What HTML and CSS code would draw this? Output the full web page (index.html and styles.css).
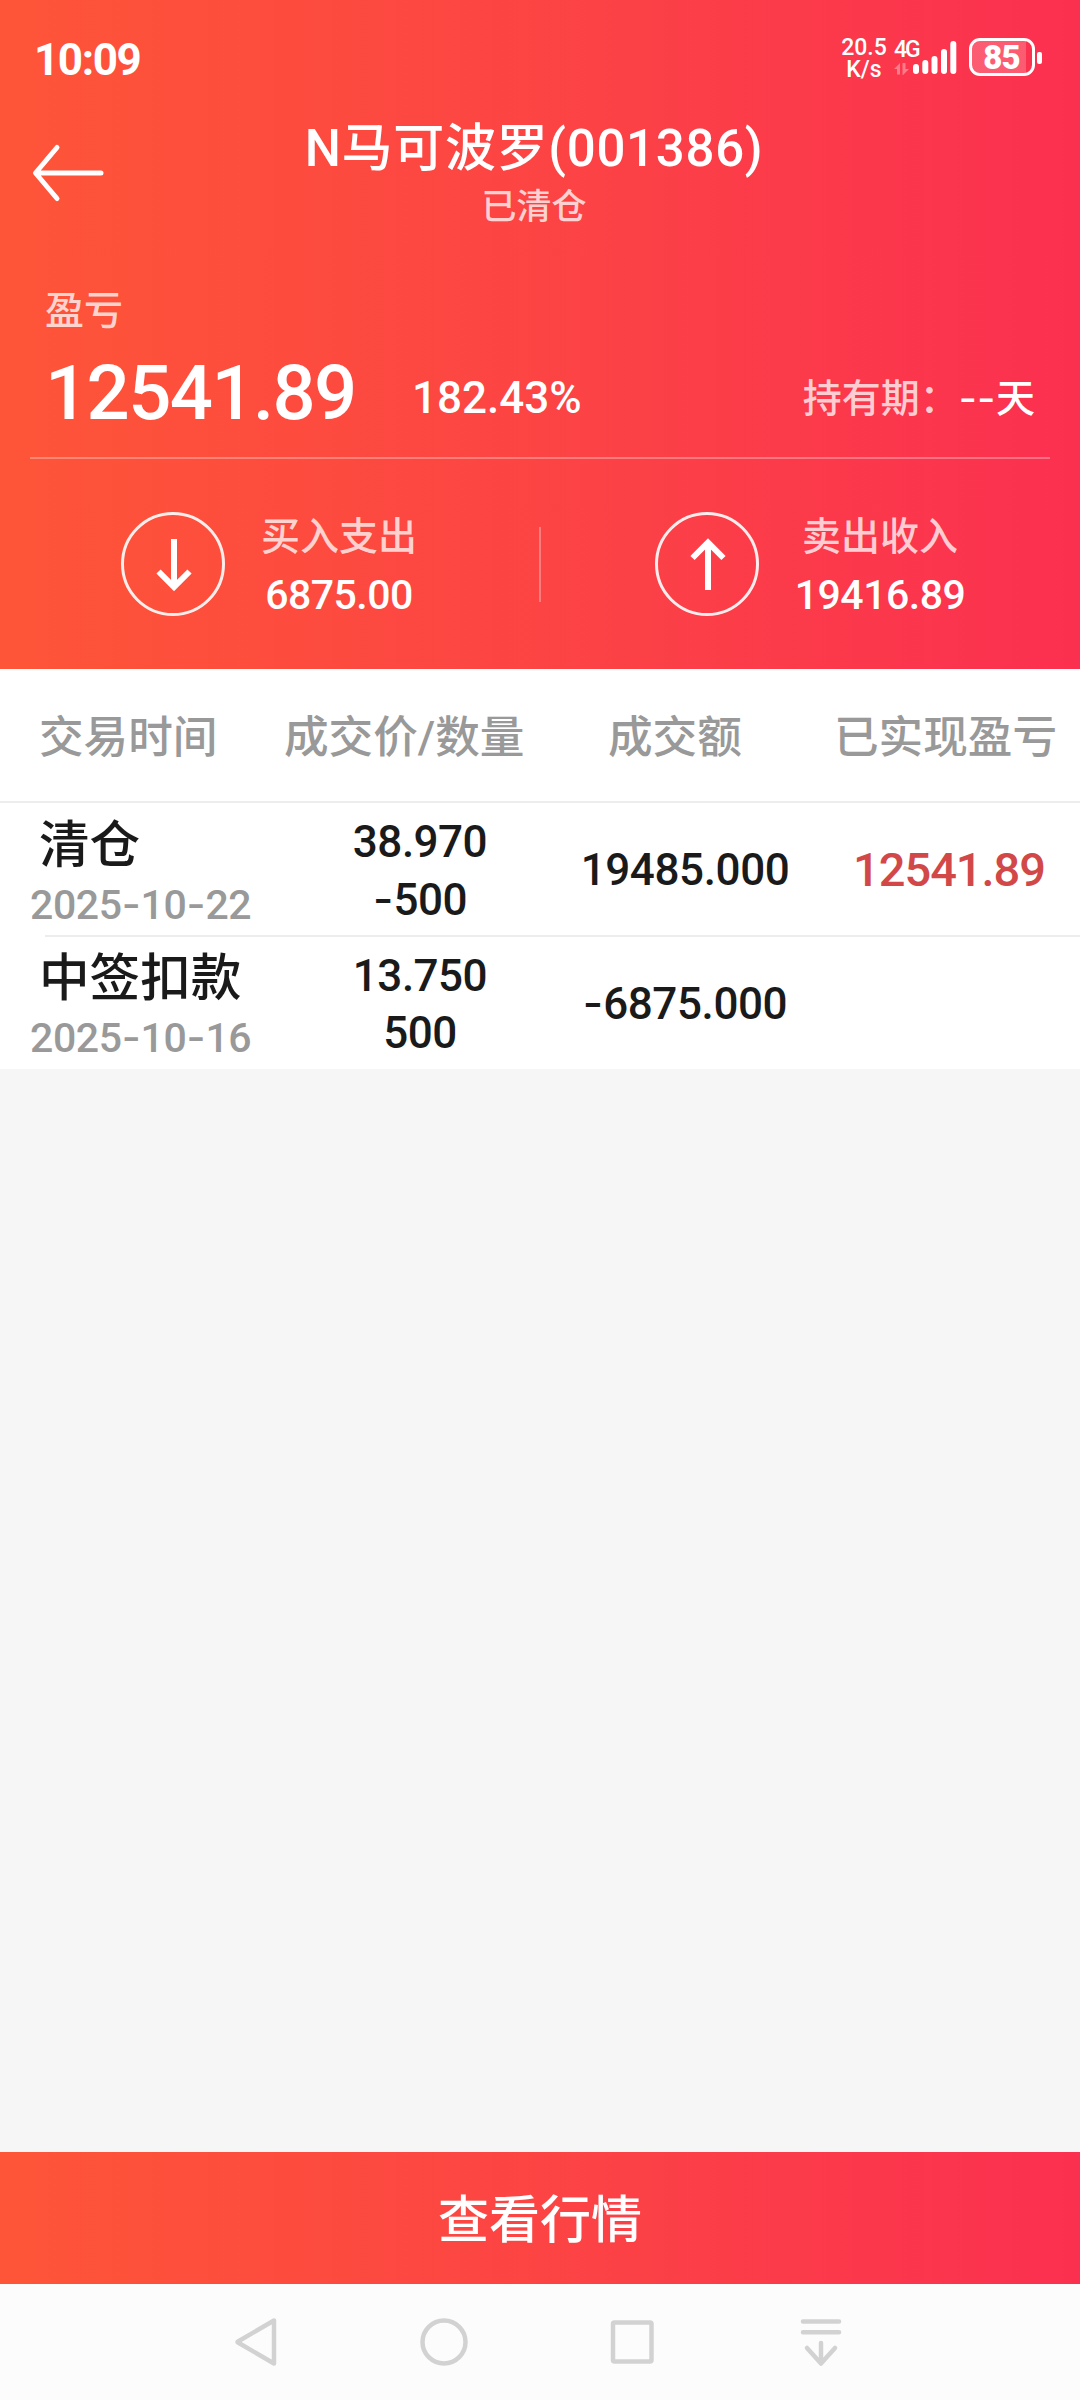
FILE: index.html
```
<!DOCTYPE html>
<html lang="zh-CN">

<head>
  <meta charset="UTF-8">
  <title>N马可波罗(001386)</title>
  <link rel="stylesheet" href="styles.css">
</head>

<body>
  <div class="header">
    <div class="status-bar">
      <span class="time">10:09</span>
      <div class="status-right">
        <div class="speed"><span>20.5</span><span>K/s</span></div>
        <div class="signal">
          <span class="net">4G</span>
          <svg width="64" height="38" viewBox="0 0 64 38">
            <g fill="#fff" fill-opacity=".35">
              <path d="M0 31l6-6v11.500h-3v-5.500zM8.500 25h3v6h3.500l-6 6h-.500z" />
            </g>
            <g stroke="#fff" stroke-width="6" stroke-linecap="round">
              <path d="M22 29v4M31.300 25v8M40.500 21v12M50 14v19M59.300 6v27" />
            </g>
          </svg>
        </div>
        <div class="battery"><span>85</span></div>
        <i class="battery-cap"></i>
      </div>
    </div>

    <div class="title-bar">
      <svg class="back" width="74" height="60" viewBox="0 0 74 60">
        <path d="M4 30h65M25 4.500L3.500 30L25 55.500" fill="none" stroke="#fff" stroke-width="5" stroke-linecap="round" stroke-linejoin="round" />
      </svg>
      <div class="titles">
        <div class="title">N马可波罗(001386)</div>
        <div class="subtitle">已清仓</div>
      </div>
    </div>

    <div class="profit">
      <div class="profit-label">盈亏</div>
      <div class="profit-row">
        <span class="profit-num">12541.89</span>
        <span class="profit-rate">182.43%</span>
        <span class="hold"><span class="light">持有期：</span><span class="dash">--</span>天</span>
      </div>
    </div>

    <div class="flows">
      <div class="flow">
        <svg width="104" height="104" viewBox="0 0 104 104" fill="none" stroke="#fff">
          <circle cx="52" cy="52" r="50.500" stroke-width="3" stroke-opacity=".9" />
          <path d="M53 27v48M37.500 59.500L53 75l15.500-15.500" stroke-width="6" />
        </svg>
        <div class="flow-text">
          <div class="light">买入支出</div>
          <div class="flow-num">6875.00</div>
        </div>
      </div>
      <div class="flow-line"></div>
      <div class="flow">
        <svg width="104" height="104" viewBox="0 0 104 104" fill="none" stroke="#fff">
          <circle cx="52" cy="52" r="50.500" stroke-width="3" stroke-opacity=".9" />
          <path d="M53 78V30M37.500 46L53 30.500L68.500 46" stroke-width="6" />
        </svg>
        <div class="flow-text">
          <div class="light">卖出收入</div>
          <div class="flow-num">19416.89</div>
        </div>
      </div>
    </div>
  </div>

  <div class="table">
    <div class="row table-head">
      <div>交易时间</div>
      <div>成交价/数量</div>
      <div>成交额</div>
      <div>已实现盈亏</div>
    </div>
    <div class="row">
      <div class="when">
        <div class="type">清仓</div>
        <div class="date">2025<span class="dash">-</span>10<span class="dash">-</span>22</div>
      </div>
      <div class="price">
        <div>38.970</div>
        <div><span class="dash">-</span>500</div>
      </div>
      <div class="amount">19485.000</div>
      <div class="gain">12541.89</div>
    </div>
    <div class="row">
      <div class="when">
        <div class="type">中签扣款</div>
        <div class="date">2025<span class="dash">-</span>10<span class="dash">-</span>16</div>
      </div>
      <div class="price">
        <div>13.750</div>
        <div>500</div>
      </div>
      <div class="amount"><span class="dash">-</span>6875.000</div>
      <div class="gain"></div>
    </div>
  </div>

  <div class="blank"></div>

  <div class="quote-btn">查看行情</div>

  <div class="nav">
    <svg width="50" height="54" viewBox="0 0 50 54">
      <path d="M42 5.500V48.500L6 27.500Q5 27 6 26.500Z" />
    </svg>
    <svg width="50" height="54" viewBox="0 0 50 54">
      <circle cx="24" cy="27" r="21.500" />
    </svg>
    <svg width="50" height="54" viewBox="0 0 50 54">
      <rect x="5" y="7.500" width="38.500" height="39" rx="1.500" />
    </svg>
    <svg width="50" height="54" viewBox="0 0 50 54">
      <path d="M7 6.500h36M7 17.200h36M25 28v20M11 33l14 15.500L39 33" />
    </svg>
  </div>
</body>

</html>
```
FILE: styles.css
```
* {
  box-sizing: border-box;
}

body {
  margin: 0;
  width: 1080px;
  height: 2400px;
  display: flex;
  flex-direction: column;
  overflow: hidden;
  background-color: #f6f6f6;
  color: #1a1a1a;
  font-family: Roboto, "Noto Sans CJK SC", sans-serif;
  font-weight: 500;
  white-space: nowrap;
}

.dash {
  font-family: Inter, sans-serif;
  letter-spacing: 0;
}

.light {
  color: rgba(255, 255, 255, 0.75);
}

/* 顶部红色区域 */
.header {
  height: 669px;
  flex: none;
  color: white;
  background: linear-gradient(to right, #fe5538, #fc4444 50%, #fb3050);
}

.status-bar {
  height: 117px;
  display: flex;
  justify-content: space-between;
  padding: 0 38px 0 34px;
}

.time {
  font-size: 44px;
  font-weight: 700;
  line-height: 120px;
  letter-spacing: -1.4px;
}

.status-right {
  display: flex;
  align-items: flex-start;
  padding-top: 38px;
}

.speed {
  width: 44px;
  margin-top: -1px;
  display: flex;
  flex-direction: column;
  align-items: center;
  font-size: 23px;
  line-height: 22px;
}

.signal {
  position: relative;
  width: 64px;
  height: 38px;
  margin-left: 8px;
}

.signal svg {
  display: block;
}

.net {
  position: absolute;
  left: 0;
  top: 0;
  font-size: 23px;
  line-height: 24px;
  letter-spacing: -2px;
}

.battery {
  width: 66px;
  height: 38px;
  margin-left: 11px;
  padding: 2px 6px 2px 2px;
  border: 3px solid white;
  border-radius: 11px;
  background: linear-gradient(rgba(255, 255, 255, 0.2), rgba(255, 255, 255, 0.2)) no-repeat 0 0 / 54px 32px;
  display: flex;
  align-items: center;
  justify-content: center;
}

.battery span {
  font-size: 33px;
  font-weight: 900;
  line-height: 32px;
  letter-spacing: -1px;
  padding: 1px 0 0 3px;
}

.battery-cap {
  width: 5px;
  height: 12px;
  margin: 14px 0 0 2px;
  border-radius: 2px;
  background-color: white;
}

.title-bar {
  height: 157px;
  display: grid;
  grid-template-columns: 107px 1fr 119px;
}

.back {
  margin: 26px 0 0 32px;
}

.titles {
  text-align: center;
}

.title {
  padding-top: 1px;
  font-size: 51px;
  line-height: 62px;
  letter-spacing: 0.7px;
}

.subtitle {
  margin-top: 7px;
  font-size: 35px;
  line-height: 42px;
  color: rgba(255, 255, 255, 0.75);
}

.profit {
  height: 185px;
  margin: 0 30px;
  padding: 14px 15px 0;
  border-bottom: 2px solid rgba(255, 255, 255, 0.3);
}

.profit-label {
  font-size: 39px;
  line-height: 46px;
  color: rgba(255, 255, 255, 0.75);
}

.profit-row {
  display: flex;
  align-items: flex-start;
  line-height: 90px;
  margin-top: 14px;
}

.profit-num {
  font-size: 76px;
  letter-spacing: -1.6px;
  width: 367px;
}

.profit-rate {
  font-size: 44px;
  line-height: 100px;
}

.hold {
  margin-left: auto;
  font-size: 39px;
  line-height: 100px;
}

.hold .dash {
  letter-spacing: 0.6px;
}

.flows {
  height: 210px;
  display: grid;
  grid-template-columns: 539px 2px 539px;
  align-items: center;
}

.flow {
  display: flex;
  align-items: center;
  padding-left: 121px;
}

.flow + .flow-line + .flow {
  padding-left: 114px;
}

.flow svg {
  flex: none;
}

.flow-text {
  width: 196px;
  margin-left: 16px;
  padding-top: 3px;
  text-align: center;
  font-size: 39px;
  line-height: 58px;
}

.flow + .flow-line + .flow .flow-text {
  margin-left: 23px;
}

.flow-num {
  font-size: 41px;
  letter-spacing: -0.5px;
}

.flow-line {
  height: 75px;
  background-color: rgba(255, 255, 255, 0.3);
}

/* 成交记录 */
.table {
  flex: none;
  background-color: white;
}

.row {
  position: relative;
  height: 133px;
  display: grid;
  grid-template-columns: 284px 272px 258px 266px;
  align-items: center;
}

.row + .row + .row::before {
  content: "";
  position: absolute;
  left: 45px;
  right: 0;
  top: -1px;
  height: 2px;
  background-color: #ededed;
}

.table-head {
  height: 134px;
  padding-bottom: 4px;
  border-bottom: 2px solid #ededed;
  color: #999;
  font-size: 44.6px;
}

.table-head div:nth-child(1) {
  padding-left: 39px;
}

.table-head div:nth-child(3) {
  padding-left: 52px;
}

.table-head div:nth-child(4) {
  padding-left: 20px;
}

.type {
  padding: 7px 0 0 39px;
  font-size: 50.6px;
  line-height: 62px;
}

.date {
  padding-left: 30px;
  font-size: 41px;
  line-height: 54px;
  letter-spacing: -0.4px;
  color: #999;
}

.price {
  padding-top: 4px;
  font-size: 44px;
  line-height: 57px;
  letter-spacing: -0.5px;
  text-align: center;
}

.amount {
  padding-top: 1px;
  text-align: center;
  font-size: 44px;
  letter-spacing: -0.4px;
}

.gain {
  padding-left: 39px;
  font-size: 47px;
  letter-spacing: -1px;
  color: #d24848;
}

.blank {
  flex: 1;
}

.quote-btn {
  flex: none;
  height: 132px;
  line-height: 138px;
  text-align: center;
  font-size: 51px;
  color: white;
  background: linear-gradient(to right, #fe5538, #fc4444 50%, #fb3050);
}

/* 系统导航栏 */
.nav {
  flex: none;
  height: 116px;
  display: flex;
  justify-content: space-between;
  align-items: center;
  padding: 0 234px 0 232px;
  background-color: #fcfcfc;
}

.nav svg {
  fill: none;
  stroke: #d2d2d2;
  stroke-width: 4.5;
  stroke-linecap: round;
  stroke-linejoin: round;
}
```
